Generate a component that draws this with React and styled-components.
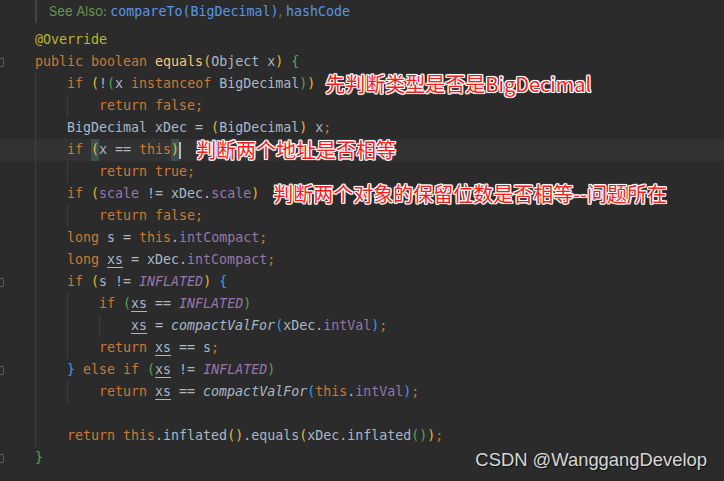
import styled, { createGlobalStyle } from "styled-components";

const GlobalStyle = createGlobalStyle`
  html, body {
    margin: 0;
    padding: 0;
    background: #2b2b2b;
  }
`;

const Page = styled.div`
  position: relative;
  width: 724px;
  height: 481px;
  overflow: hidden;
  background: #2b2b2b;
  font-family: "DejaVu Sans Mono", "Liberation Mono", monospace;
  font-size: 13.3px;
  color: #a9b7c6;
`;

const DocRow = styled.div`
  display: flex;
  height: 29px;
`;

const Gutter = styled.div`
  position: relative;
  flex: none;
  width: 35px;
`;

const DocBar = styled.div`
  height: 23px;
  border-left: 2px solid #3e4a38;
  padding-left: 12px;
  line-height: 23px;
  font-family: Inter, "Noto Sans", sans-serif;
  font-size: 13px;
  color: #629755;
  white-space: pre;
`;

const DocLink = styled.span`
  font-family: "DejaVu Sans Mono", monospace;
  font-size: 13.3px;
  color: #5796e8;
`;

const Row = styled.div`
  display: flex;
  height: 22px;
  line-height: 22px;
  white-space: pre;
  background: ${({ $current }) => ($current ? "#323232" : "transparent")};
`;

const FoldMark = styled.span`
  position: absolute;
  left: -3px;
  top: 7px;
  width: 5px;
  height: 7px;
  border: 1px solid #5c5c5c;
  border-radius: 1px;
`;

const guideColors = ["#394532", "#2d4258", "#3d3d3d"];

const Indent = styled.span`
  flex: none;
  box-sizing: border-box;
  width: 32px;
  height: 22px;
  border-left: 1px solid ${({ $level }) => guideColors[$level]};
`;

const Code = styled.span`
  display: flex;
  align-items: center;
`;

const tokenColors = {
  kw: "#cc7832",
  id: "#a9b7c6",
  fld: "#9876aa",
  fn: "#ffc66d",
  ann: "#bbb529",
  cst: "#9876aa",
  sm: "#a9b7c6",
  y: "#e8ba36",
  g: "#54a857",
  b: "#359ff4",
  u: "#a9b7c6",
};

const Tok = styled.span`
  color: ${({ $t }) => tokenColors[$t]};
  font-style: ${({ $t }) => ($t === "cst" || $t === "sm" ? "italic" : "normal")};
  text-decoration: ${({ $t }) => ($t === "u" ? "underline" : "none")};
  text-underline-offset: 3px;
  text-decoration-color: #a9b7c6;
  background: ${({ $match }) => ($match ? "#3b514d" : "transparent")};
`;

const Caret = styled.span`
  display: inline-block;
  width: 2px;
  height: 17px;
  background: #bbbbbb;
`;

const Note = styled.span`
  margin-left: ${({ $gap }) => $gap}px;
  font-family: "Noto Sans CJK SC", "Noto Sans", sans-serif;
  font-size: 20px;
  line-height: 22px;
  color: #ff1a1a;
  text-shadow: 1px 0 #fff, -1px 0 #fff, 0 1px #fff, 0 -1px #fff, 1px 1px #fff,
    -1px -1px #fff, 1px -1px #fff, -1px 1px #fff, 0 0 2px #fff, 0 0 2px #fff;
`;

const Watermark = styled.div`
  position: absolute;
  right: 17px;
  bottom: 11px;
  font-family: "Liberation Sans", Arial, sans-serif;
  font-size: 18.4px;
  line-height: 20px;
  color: #d6d6d6;
  text-shadow: 1px 1px 1px rgba(0, 0, 0, 0.6);
`;

const lines = [
  { indent: 0, toks: [["ann", "@Override"]] },
  {
    indent: 0,
    fold: true,
    toks: [
      ["kw", "public boolean "],
      ["fn", "equals"],
      ["y", "("],
      ["id", "Object x"],
      ["y", ")"],
      ["id", " "],
      ["g", "{"],
    ],
  },
  {
    indent: 1,
    toks: [
      ["kw", "if "],
      ["y", "("],
      ["id", "!"],
      ["g", "("],
      ["id", "x "],
      ["kw", "instanceof "],
      ["id", "BigDecimal"],
      ["g", ")"],
      ["y", ")"],
    ],
    note: { text: "先判断类型是否是BigDecimal", gap: 10 },
  },
  { indent: 2, toks: [["kw", "return false;"]] },
  {
    indent: 1,
    toks: [
      ["id", "BigDecimal xDec = "],
      ["y", "("],
      ["id", "BigDecimal"],
      ["y", ")"],
      ["id", " x"],
      ["kw", ";"],
    ],
  },
  {
    indent: 1,
    current: true,
    toks: [
      ["kw", "if "],
      ["y", "(", true],
      ["id", "x == "],
      ["kw", "this"],
      ["y", ")", true],
    ],
    caret: true,
    note: { text: "判断两个地址是否相等", gap: 15 },
  },
  { indent: 2, toks: [["kw", "return true;"]] },
  {
    indent: 1,
    toks: [
      ["kw", "if "],
      ["y", "("],
      ["fld", "scale"],
      ["id", " != xDec."],
      ["fld", "scale"],
      ["y", ")"],
    ],
    note: { text: "判断两个对象的保留位数是否相等--问题所在", gap: 14 },
  },
  { indent: 2, toks: [["kw", "return false;"]] },
  {
    indent: 1,
    toks: [
      ["kw", "long "],
      ["id", "s = "],
      ["kw", "this"],
      ["id", "."],
      ["fld", "intCompact"],
      ["kw", ";"],
    ],
  },
  {
    indent: 1,
    toks: [
      ["kw", "long "],
      ["u", "xs"],
      ["id", " = xDec."],
      ["fld", "intCompact"],
      ["kw", ";"],
    ],
  },
  {
    indent: 1,
    fold: true,
    toks: [
      ["kw", "if "],
      ["y", "("],
      ["id", "s != "],
      ["cst", "INFLATED"],
      ["y", ")"],
      ["id", " "],
      ["b", "{"],
    ],
  },
  {
    indent: 2,
    toks: [
      ["kw", "if "],
      ["g", "("],
      ["u", "xs"],
      ["id", " == "],
      ["cst", "INFLATED"],
      ["g", ")"],
    ],
  },
  {
    indent: 3,
    toks: [
      ["u", "xs"],
      ["id", " = "],
      ["sm", "compactValFor"],
      ["b", "("],
      ["id", "xDec."],
      ["fld", "intVal"],
      ["b", ")"],
      ["kw", ";"],
    ],
  },
  {
    indent: 2,
    toks: [
      ["kw", "return "],
      ["u", "xs"],
      ["id", " == s"],
      ["kw", ";"],
    ],
  },
  {
    indent: 1,
    fold: true,
    toks: [
      ["b", "}"],
      ["kw", " else if "],
      ["g", "("],
      ["u", "xs"],
      ["id", " != "],
      ["cst", "INFLATED"],
      ["g", ")"],
    ],
  },
  {
    indent: 2,
    toks: [
      ["kw", "return "],
      ["u", "xs"],
      ["id", " == "],
      ["sm", "compactValFor"],
      ["b", "("],
      ["kw", "this"],
      ["id", "."],
      ["fld", "intVal"],
      ["b", ")"],
      ["kw", ";"],
    ],
  },
  { indent: 1, toks: [] },
  {
    indent: 1,
    toks: [
      ["kw", "return this"],
      ["id", ".inflated"],
      ["y", "()"],
      ["id", ".equals"],
      ["y", "("],
      ["id", "xDec.inflated"],
      ["g", "()"],
      ["y", ")"],
      ["kw", ";"],
    ],
  },
  { indent: 0, fold: true, toks: [["g", "}"]] },
];

function CodeLine({ line }) {
  return (
    <Row $current={line.current}>
      <Gutter>{line.fold && <FoldMark />}</Gutter>
      {Array.from({ length: line.indent }, (_, i) => (
        <Indent key={i} $level={i} />
      ))}
      <Code>
        {line.toks.map(([t, text, match], i) => (
          <Tok key={i} $t={t} $match={match}>
            {text}
          </Tok>
        ))}
        {line.caret && <Caret />}
        {line.note && <Note $gap={line.note.gap}>{line.note.text}</Note>}
      </Code>
    </Row>
  );
}

export default function App() {
  return (
    <>
      <GlobalStyle />
      <Page>
        <DocRow>
          <Gutter />
          <DocBar>
            See Also: <DocLink>compareTo(BigDecimal)</DocLink>,{" "}
            <DocLink>hashCode</DocLink>
          </DocBar>
        </DocRow>
        {lines.map((line, i) => (
          <CodeLine key={i} line={line} />
        ))}
        <Watermark>CSDN @WanggangDevelop</Watermark>
      </Page>
    </>
  );
}
